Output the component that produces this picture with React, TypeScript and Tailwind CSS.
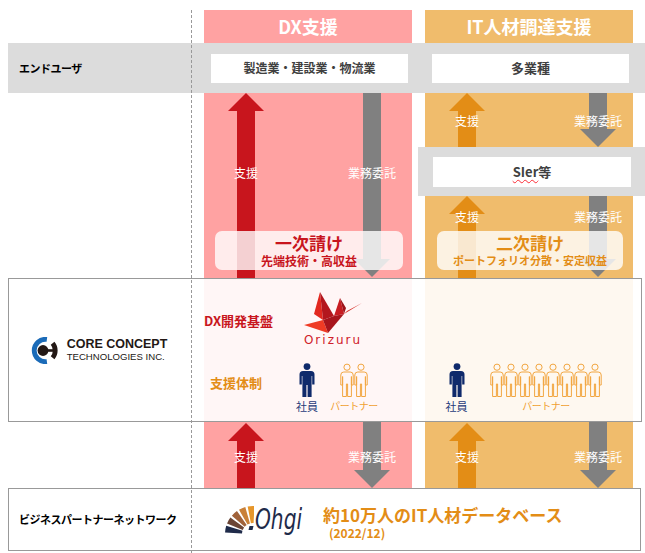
import React from "react"

// Up / down arrow with a label laid on top of it
function Arrow({ pos, up, shaft, fill, label, labelTop }: { pos: string; up?: boolean; shaft: string; fill: string; label: string; labelTop: string }) {
  const head = (
    <svg width="36" height="18" viewBox="0 0 36 18" className="block shrink-0">
      <polygon points={up ? "0,18 18,0 36,18" : "0,0 36,0 18,18"} fill={fill} />
    </svg>
  )
  return (
    <div className={`absolute flex w-[36px] flex-col items-center ${pos}`}>
      {up && head}
      <div className={`w-[18px] flex-1 ${shaft}`} />
      {!up && head}
      <div className={`absolute left-1/2 -translate-x-1/2 whitespace-nowrap text-[12px] leading-[16px] text-white ${labelTop}`}>{label}</div>
    </div>
  )
}

const Person = () => (
  <svg width="16" height="34" viewBox="0 0 16 34" className="block">
    <circle cx="8" cy="3.6" r="3.4" fill="#0f2a6b" />
    <path d="M4,8 H12 Q15.5,8 15.5,11.5 V21.5 H13.2 V13 H12.6 V34 H8.6 V22 H7.4 V34 H3.4 V13 H2.8 V21.5 H0.5 V11.5 Q0.5,8 4,8 Z" fill="#0f2a6b" />
  </svg>
)

const Partner = () => (
  <svg width="14" height="34" viewBox="0 0 14 34" className="block shrink-0">
    <g fill="none" stroke="#f2a640" strokeWidth="1">
      <circle cx="7" cy="4.2" r="3.1" />
      <path d="M3.8,9 H10.2 Q13.2,9 13.2,12 V22 H11.4 V13.5 V33.5 H7.6 V21 H6.4 V33.5 H2.6 V13.5 V22 H0.8 V12 Q0.8,9 3.8,9 Z" />
    </g>
  </svg>
)

const CctMark = () => (
  <svg width="30" height="27" viewBox="0 0 30 27" className="block">
    <path d="M16.9,2.4 A11.2,11.2 0 1 0 16.9,24.6" fill="none" stroke="#1b6bb8" strokeWidth="4.8" />
    <path d="M22.6,6.3 A11.2,11.2 0 0 1 22.6,20.7" fill="none" stroke="#231815" strokeWidth="4.8" />
    <circle cx="13" cy="13.5" r="5.4" fill="#231815" />
    <rect x="14" y="12.2" width="9.5" height="2.6" fill="#231815" />
  </svg>
)

const Crane = () => (
  <svg width="62" height="44" viewBox="0 0 62 44" className="block">
    <polygon points="18,2 21,30 12,24" fill="#e2281f" />
    <polygon points="18,2 32,26 21,30" fill="#b3161d" />
    <polygon points="38,8 32,26 42,24" fill="#c81c21" />
    <polygon points="38,8 42,24 44,18" fill="#9c1218" />
    <polygon points="42,24 60,13 45,21" fill="#d42a22" />
    <polygon points="2,35 21,30 26,43" fill="#ef3b24" />
    <polygon points="21,30 32,26 42,24 26,43" fill="#a8151c" />
  </svg>
)

function wedge(a1: number, a2: number) {
  const cx = 31, cy = 28, r1 = 11, r2 = 28
  const p = (r: number, a: number) => `${(cx + r * Math.cos((a * Math.PI) / 180)).toFixed(2)},${(cy + r * Math.sin((a * Math.PI) / 180)).toFixed(2)}`
  return `M${p(r2, a1)} A${r2},${r2} 0 0 1 ${p(r2, a2)} L${p(r1, a2)} A${r1},${r1} 0 0 0 ${p(r1, a1)} Z`
}

const OhgiFan = () => {
  const segs: [number, number, string][] = [
    [183, 197, "#1f2b4a"],
    [202, 216, "#6b4535"],
    [221, 235, "#a0623a"],
    [240, 254, "#c98038"],
    [259, 273, "#e6962a"],
  ]
  return (
    <svg width="32" height="28" viewBox="0 0 32 28" className="block">
      {segs.map(([a, b, c]) => (
        <path key={a} d={wedge(a, b)} fill={c} />
      ))}
      <polygon points="27.5,20 31.5,20 30.5,24 26.5,24" fill="#1f2b4a" />
    </svg>
  )
}

export default function App() {
  return (
    <div className="relative h-[553px] w-[645px] overflow-hidden bg-white font-['Noto_Sans_CJK_JP',sans-serif]">
      {/* columns */}
      <div className="absolute left-[204px] top-[10px] flex gap-[13px]">
        <div className="h-[478px] w-[208px] bg-[#ffa2a2]">
          <div className="flex h-[33px] items-center justify-center text-[18px] font-bold text-white">DX支援</div>
        </div>
        <div className="h-[478px] w-[208px] bg-[#f0bc6c]">
          <div className="flex h-[33px] items-center justify-center text-[18px] font-bold text-white">IT人材調達支援</div>
        </div>
      </div>

      {/* arrows */}
      <Arrow up pos="left-[228px] top-[93px] h-[185px]" shaft="bg-[#c8151d]" fill="#c8151d" label="支援" labelTop="top-[72px]" />
      <Arrow pos="left-[354px] top-[93px] h-[184px]" shaft="bg-[#808080]" fill="#808080" label="業務委託" labelTop="top-[72px]" />
      <Arrow up pos="left-[449px] top-[93px] h-[54px]" shaft="bg-[#e38d16]" fill="#e38d16" label="支援" labelTop="top-[20px]" />
      <Arrow pos="left-[580px] top-[93px] h-[54px]" shaft="bg-[#808080]" fill="#808080" label="業務委託" labelTop="top-[20px]" />
      <Arrow up pos="left-[449px] top-[196px] h-[82px]" shaft="bg-[#e38d16]" fill="#e38d16" label="支援" labelTop="top-[13px]" />
      <Arrow pos="left-[580px] top-[196px] h-[81px]" shaft="bg-[#808080]" fill="#808080" label="業務委託" labelTop="top-[13px]" />
      <Arrow up pos="left-[228px] top-[423px] h-[65px]" shaft="bg-[#c8151d]" fill="#c8151d" label="支援" labelTop="top-[26px]" />
      <Arrow pos="left-[354px] top-[422px] h-[66px]" shaft="bg-[#808080]" fill="#808080" label="業務委託" labelTop="top-[27px]" />
      <Arrow up pos="left-[449px] top-[423px] h-[65px]" shaft="bg-[#e38d16]" fill="#e38d16" label="支援" labelTop="top-[26px]" />
      <Arrow pos="left-[580px] top-[422px] h-[66px]" shaft="bg-[#808080]" fill="#808080" label="業務委託" labelTop="top-[27px]" />

      {/* rows */}
      <div className="relative flex flex-col pt-[43px]">
        {/* end users */}
        <div className="ml-[8px] flex h-[50px] items-center bg-[#dcdcdc]">
          <div className="w-[196px] pl-[11px] text-[11px] font-bold tracking-[-0.5px] text-black">エンドユーザ</div>
          <div className="ml-[7px] flex h-[29px] w-[197px] items-center justify-center bg-white text-[12px] font-bold text-[#404040]">製造業・建設業・物流業</div>
          <div className="ml-[24px] flex h-[29px] w-[197px] items-center justify-center bg-white text-[13px] font-bold text-[#404040]">多業種</div>
        </div>

        <div className="h-[54px]" />

        {/* SIer */}
        <div className="ml-[418px] h-[49px] bg-[#dcdcdc] pl-[15px] pt-[10px]">
          <div className="flex h-[30px] w-[198px] items-center justify-center bg-white text-[13px] font-bold text-[#404040]">
            <span className="underline decoration-red-500 decoration-wavy decoration-1 underline-offset-2">SIer</span>等
          </div>
        </div>

        <div className="h-[35px]" />

        {/* contract tiers */}
        <div className="flex h-[39px]">
          <div className="ml-[215px] flex w-[188px] flex-col items-center justify-center rounded-[7px] bg-white/80 font-bold text-[#c8151d]">
            <div className="text-[17px] leading-[20px]">一次請け</div>
            <div className="text-[12px] leading-[15px]">先端技術・高収益</div>
          </div>
          <div className="ml-[34px] flex w-[186px] flex-col items-center justify-center rounded-[7px] bg-white/80 font-bold text-[#e38d16]">
            <div className="text-[17px] leading-[20px]">二次請け</div>
            <div className="text-[11px] leading-[15px]">ポートフォリオ分散・安定収益</div>
          </div>
        </div>

        <div className="h-[8px]" />

        {/* Core Concept */}
        <div className="ml-[8px] flex h-[144px] w-[634px] border border-[#999] bg-white/90">
          <div className="flex w-[183px] items-center justify-center pr-[4px]">
            <div className="flex items-center gap-[7px]">
              <CctMark />
              <div className="font-['Liberation_Sans',sans-serif] text-[#231815]">
                <div className="text-[12.5px] font-bold leading-[13px]">CORE CONCEPT</div>
                <div className="text-[9.6px] leading-[11px]">TECHNOLOGIES INC.</div>
              </div>
            </div>
          </div>

          <div className="ml-[12px] flex w-[208px] flex-col">
            <div className="mt-[11px] flex h-[56px]">
              <div className="mt-[6px] w-[98px] self-center text-[13px] font-bold text-[#c8151d]">DX開発基盤</div>
              <div className="flex w-[62px] flex-col items-center">
                <Crane />
                <div className="font-['DejaVu_Sans',sans-serif] text-[12px] leading-[12px] tracking-[2px] text-[#d0202a]">Orizuru</div>
              </div>
            </div>
            <div className="mt-[17px] flex items-start">
              <div className="ml-[6px] mt-[12px] w-[86px] text-[13px] font-bold leading-[16px] text-[#e38d16]">支援体制</div>
              <div className="flex w-[22px] flex-col items-center">
                <Person />
                <div className="mt-[3px] whitespace-nowrap text-[11px] leading-[12px] text-[#1f3a7a]">社員</div>
              </div>
              <div className="ml-[13px] flex w-[46px] flex-col items-center">
                <div className="flex">
                  <Partner />
                  <Partner />
                </div>
                <div className="mt-[3px] whitespace-nowrap text-[10px] leading-[12px] tracking-[-0.5px] text-[#f0a030]">パートナー</div>
              </div>
            </div>
          </div>

          <div className="ml-[13px] flex w-[208px] items-start pt-[84px]">
            <div className="ml-[20px] flex w-[23px] flex-col items-center">
              <Person />
              <div className="mt-[3px] whitespace-nowrap text-[11px] leading-[12px] text-[#1f3a7a]">社員</div>
            </div>
            <div className="ml-[22px] flex w-[112px] flex-col items-center">
              <div className="flex">
                {[0, 1, 2, 3, 4, 5, 6, 7].map((i) => (
                  <Partner key={i} />
                ))}
              </div>
              <div className="mt-[3px] whitespace-nowrap text-[10px] leading-[12px] tracking-[-0.5px] text-[#f0a030]">パートナー</div>
            </div>
          </div>
        </div>

        <div className="h-[66px]" />

        {/* Business partner network */}
        <div className="ml-[8px] flex h-[63px] w-[633px] items-center border border-[#999] bg-white">
          <div className="w-[183px] pl-[10px] text-[11px] font-bold tracking-[-0.5px] text-black">ビジネスパートナーネットワーク</div>
          <div className="ml-[30px] flex items-center">
            <OhgiFan />
            <div className="ml-[1px] w-[48px] overflow-visible">
              <div className="origin-left scale-x-[0.72] whitespace-nowrap font-['DejaVu_Sans',sans-serif] text-[28px] font-light italic leading-[28px] text-[#1f2b4a]">Ohgi</div>
            </div>
          </div>
          <div className="ml-[20px] mt-[4px] flex flex-col font-bold text-[#e38d16]">
            <div className="text-[17px] leading-[21px]">約10万人のIT人材データベース</div>
            <div className="ml-[6px] text-[12px] leading-[15px]">(2022/12)</div>
          </div>
        </div>
      </div>

      {/* dashed divider */}
      <div className="absolute bottom-0 left-[191px] top-[10px] border-l border-dashed border-[#999]" />
    </div>
  )
}
